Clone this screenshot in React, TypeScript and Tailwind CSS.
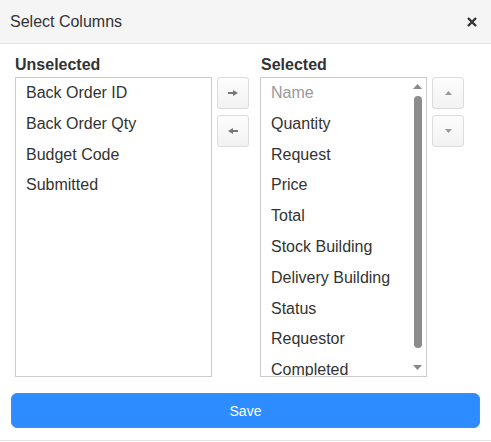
import React from "react";

const unselected = ["Back Order ID", "Back Order Qty", "Budget Code", "Submitted"];
const selected = [
  "Name",
  "Quantity",
  "Request",
  "Price",
  "Total",
  "Stock Building",
  "Delivery Building",
  "Status",
  "Requestor",
  "Completed",
];

function ArrowRight() {
  return (
    <svg width="10" height="6" viewBox="0 0 10 6">
      <rect x="0" y="2" width="6" height="2" fill="#777" />
      <polygon points="5,0 10,3 5,6" fill="#777" />
    </svg>
  );
}
function ArrowLeft() {
  return (
    <svg width="10" height="6" viewBox="0 0 10 6">
      <rect x="4" y="2" width="6" height="2" fill="#777" />
      <polygon points="5,0 0,3 5,6" fill="#777" />
    </svg>
  );
}
function TriUp({ w = 6, h = 4, c = "#888" }: { w?: number; h?: number; c?: string }) {
  return (
    <svg width={w} height={h} viewBox={`0 0 ${w} ${h}`}>
      <polygon points={`0,${h} ${w / 2},0 ${w},${h}`} fill={c} />
    </svg>
  );
}
function TriDown({ w = 6, h = 4, c = "#888" }: { w?: number; h?: number; c?: string }) {
  return (
    <svg width={w} height={h} viewBox={`0 0 ${w} ${h}`}>
      <polygon points={`0,0 ${w / 2},${h} ${w},0`} fill={c} />
    </svg>
  );
}

function SmallButton({ children }: { children: React.ReactNode }) {
  return (
    <button className="w-[32px] h-[32px] flex items-center justify-center rounded-[3px] border border-[#dcdcdc] bg-gradient-to-b from-[#fdfdfd] to-[#f2f2f2]">
      {children}
    </button>
  );
}

export default function App() {
  return (
    <div className="w-[491px] h-[442px] bg-white text-[#333] font-['Liberation_Sans',Arial,sans-serif] overflow-hidden">
      <div className="h-[44px] bg-[#f5f5f5] border-b border-[#e3e3e3] flex items-center justify-between pl-[10px] pr-[14px]">
        <span className="text-[16px] leading-[18px]">Select Columns</span>
        <svg width="10" height="10" viewBox="0 0 10 10">
          <path d="M1 1 L9 9 M9 1 L1 9" stroke="#333" strokeWidth="2.4" strokeLinecap="butt" />
        </svg>
      </div>

      <div className="flex pl-[15px] pt-[12px]">
        <div className="w-[197px]">
          <div className="h-[18px] leading-[18px] text-[16px] font-bold mb-[3px]">Unselected</div>
          <div className="h-[300px] border border-[#ccc] pt-[6px] overflow-hidden">
            {unselected.map((t) => (
              <div key={t} className="h-[30.8px] leading-[18px] text-[16px] pl-[10px]">
                {t}
              </div>
            ))}
          </div>
        </div>

        <div className="ml-[5px] mt-[21px] flex flex-col gap-[6px]">
          <SmallButton>
            <ArrowRight />
          </SmallButton>
          <SmallButton>
            <ArrowLeft />
          </SmallButton>
        </div>

        <div className="ml-[11px] w-[167px]">
          <div className="h-[18px] leading-[18px] text-[16px] font-bold mb-[3px] pl-[1px]">Selected</div>
          <div className="h-[300px] border border-[#ccc] flex overflow-hidden">
            <div className="flex-1 pt-[6px] overflow-hidden">
              {selected.map((t, i) => (
                <div
                  key={t}
                  className={`h-[30.8px] leading-[18px] text-[16px] pl-[10px] whitespace-nowrap ${
                    i === 0 ? "text-[#999]" : "text-[#333]"
                  }`}
                >
                  {t}
                </div>
              ))}
            </div>
            <div className="w-[17px] flex flex-col items-center pt-[6px]">
              <TriUp w={9} h={5} c="#8a8a8a" />
              <div className="mt-[7px] w-[8px] h-[252px] rounded-full bg-[#8c8c8c]" />
              <div className="mt-[17px]">
                <TriDown w={9} h={5} c="#8a8a8a" />
              </div>
            </div>
          </div>
        </div>

        <div className="ml-[5px] mt-[21px] flex flex-col gap-[6px]">
          <SmallButton>
            <TriUp w={7} h={4} c="#999" />
          </SmallButton>
          <SmallButton>
            <TriDown w={7} h={4} c="#999" />
          </SmallButton>
        </div>
      </div>

      <div className="px-[11px] mt-[16px]">
        <button className="w-full h-[35px] rounded-[6px] bg-[#2d8cff] border border-[#3b8ff5] text-white text-[14px] leading-[16px] flex items-center justify-center">
          Save
        </button>
      </div>
      <div className="mt-[12px] border-t border-[#e5e5e5]" />
    </div>
  );
}
